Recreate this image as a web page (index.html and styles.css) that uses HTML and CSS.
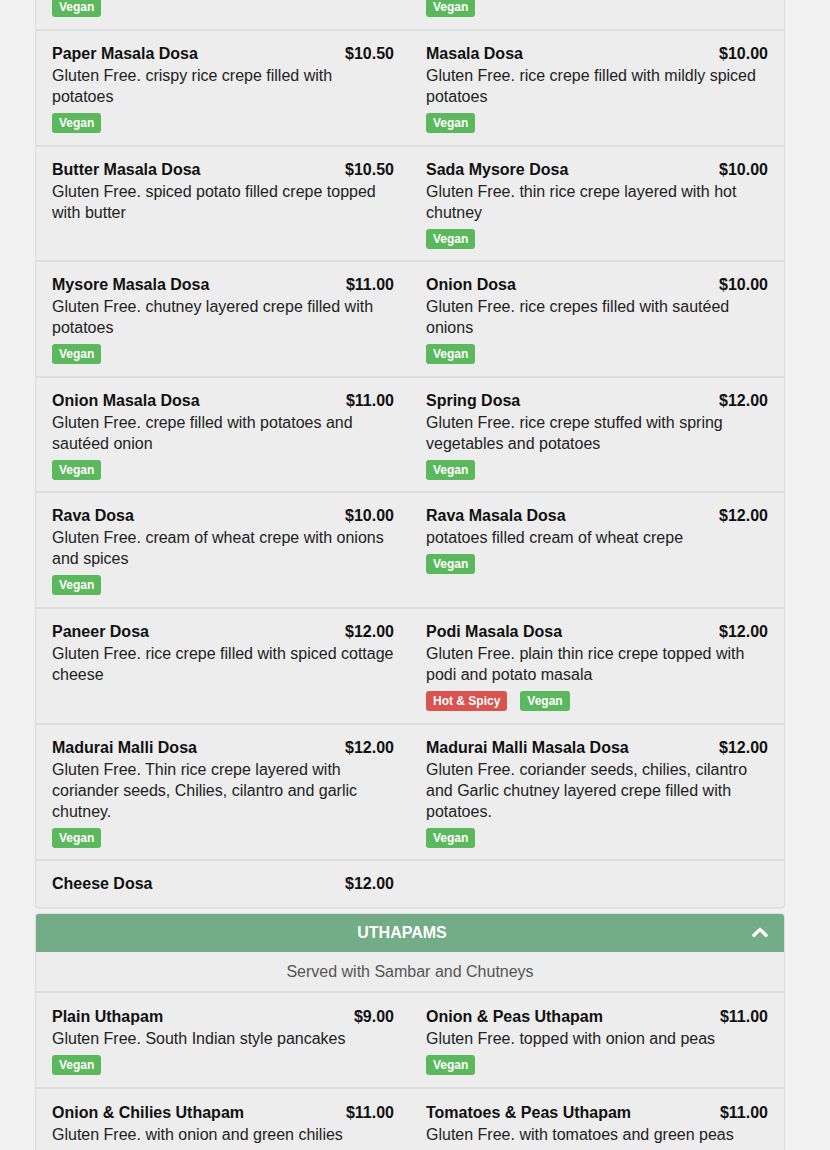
FILE: index.html
```html
<!DOCTYPE html>
<html lang="en">
<head>
<meta charset="utf-8">
<title>Menu</title>
<link rel="stylesheet" href="styles.css">
</head>
<body>
<div class="page">
  <section class="panel panel-first">
    <div class="body">
      <div class="row">
        <div class="item">
          <div class="head"><span class="name">Plain Dosa</span><span class="price">$9.00</span></div>
          <p class="desc">Gluten Free. thin and crispy rice crepe served plain</p>
          <div class="tags"><span class="tag vegan">Vegan</span></div>
        </div>
        <div class="item">
          <div class="head"><span class="name">Ghee Dosa</span><span class="price">$10.00</span></div>
          <p class="desc">Gluten Free. thin rice crepe roasted with clarified butter</p>
          <div class="tags"><span class="tag vegan">Vegan</span></div>
        </div>
      </div>
      <div class="row">
        <div class="item">
          <div class="head"><span class="name">Paper Masala Dosa</span><span class="price">$10.50</span></div>
          <p class="desc">Gluten Free. crispy rice crepe filled with potatoes</p>
          <div class="tags"><span class="tag vegan">Vegan</span></div>
        </div>
        <div class="item">
          <div class="head"><span class="name">Masala Dosa</span><span class="price">$10.00</span></div>
          <p class="desc">Gluten Free. rice crepe filled with mildly spiced potatoes</p>
          <div class="tags"><span class="tag vegan">Vegan</span></div>
        </div>
      </div>
      <div class="row">
        <div class="item">
          <div class="head"><span class="name">Butter Masala Dosa</span><span class="price">$10.50</span></div>
          <p class="desc">Gluten Free. spiced potato filled crepe topped with butter</p>
        </div>
        <div class="item">
          <div class="head"><span class="name">Sada Mysore Dosa</span><span class="price">$10.00</span></div>
          <p class="desc">Gluten Free. thin rice crepe layered with hot chutney</p>
          <div class="tags"><span class="tag vegan">Vegan</span></div>
        </div>
      </div>
      <div class="row">
        <div class="item">
          <div class="head"><span class="name">Mysore Masala Dosa</span><span class="price">$11.00</span></div>
          <p class="desc">Gluten Free. chutney layered crepe filled with potatoes</p>
          <div class="tags"><span class="tag vegan">Vegan</span></div>
        </div>
        <div class="item">
          <div class="head"><span class="name">Onion Dosa</span><span class="price">$10.00</span></div>
          <p class="desc">Gluten Free. rice crepes filled with sautéed onions</p>
          <div class="tags"><span class="tag vegan">Vegan</span></div>
        </div>
      </div>
      <div class="row">
        <div class="item">
          <div class="head"><span class="name">Onion Masala Dosa</span><span class="price">$11.00</span></div>
          <p class="desc">Gluten Free. crepe filled with potatoes and sautéed onion</p>
          <div class="tags"><span class="tag vegan">Vegan</span></div>
        </div>
        <div class="item">
          <div class="head"><span class="name">Spring Dosa</span><span class="price">$12.00</span></div>
          <p class="desc">Gluten Free. rice crepe stuffed with spring vegetables and potatoes</p>
          <div class="tags"><span class="tag vegan">Vegan</span></div>
        </div>
      </div>
      <div class="row">
        <div class="item">
          <div class="head"><span class="name">Rava Dosa</span><span class="price">$10.00</span></div>
          <p class="desc">Gluten Free. cream of wheat crepe with onions and spices</p>
          <div class="tags"><span class="tag vegan">Vegan</span></div>
        </div>
        <div class="item">
          <div class="head"><span class="name">Rava Masala Dosa</span><span class="price">$12.00</span></div>
          <p class="desc">potatoes filled cream of wheat crepe</p>
          <div class="tags"><span class="tag vegan">Vegan</span></div>
        </div>
      </div>
      <div class="row">
        <div class="item">
          <div class="head"><span class="name">Paneer Dosa</span><span class="price">$12.00</span></div>
          <p class="desc">Gluten Free. rice crepe filled with spiced cottage cheese</p>
        </div>
        <div class="item">
          <div class="head"><span class="name">Podi Masala Dosa</span><span class="price">$12.00</span></div>
          <p class="desc">Gluten Free. plain thin rice crepe topped with podi and potato masala</p>
          <div class="tags"><span class="tag hot">Hot &amp; Spicy</span><span class="tag vegan">Vegan</span></div>
        </div>
      </div>
      <div class="row">
        <div class="item">
          <div class="head"><span class="name">Madurai Malli Dosa</span><span class="price">$12.00</span></div>
          <p class="desc">Gluten Free. Thin rice crepe layered with coriander seeds, Chilies, cilantro and garlic chutney.</p>
          <div class="tags"><span class="tag vegan">Vegan</span></div>
        </div>
        <div class="item">
          <div class="head"><span class="name">Madurai Malli Masala Dosa</span><span class="price">$12.00</span></div>
          <p class="desc">Gluten Free. coriander seeds, chilies, cilantro and Garlic chutney layered crepe filled with potatoes.</p>
          <div class="tags"><span class="tag vegan">Vegan</span></div>
        </div>
      </div>
      <div class="row">
        <div class="item">
          <div class="head"><span class="name">Cheese Dosa</span><span class="price">$12.00</span></div>
        </div>
        <div class="item"></div>
      </div>
    </div>
  </section>

  <section class="panel">
    <div class="heading">
      <span class="heading-title">UTHAPAMS</span>
      <svg class="chevron" width="16" height="10" viewBox="0 0 16 10" aria-hidden="true">
        <path d="M2 8.2 L8 2.4 L14 8.2" fill="none" stroke="#fff" stroke-width="3.4" stroke-linecap="round" stroke-linejoin="round"/>
      </svg>
    </div>
    <div class="body">
      <div class="note">Served with Sambar and Chutneys</div>
      <div class="row">
        <div class="item item-wide">
          <div class="head"><span class="name">Plain Uthapam</span><span class="price">$9.00</span></div>
          <p class="desc">Gluten Free. South Indian style pancakes</p>
          <div class="tags"><span class="tag vegan">Vegan</span></div>
        </div>
        <div class="item item-wide">
          <div class="head"><span class="name">Onion &amp; Peas Uthapam</span><span class="price">$11.00</span></div>
          <p class="desc">Gluten Free. topped with onion and peas</p>
          <div class="tags"><span class="tag vegan">Vegan</span></div>
        </div>
      </div>
      <div class="row">
        <div class="item item-wide">
          <div class="head"><span class="name">Onion &amp; Chilies Uthapam</span><span class="price">$11.00</span></div>
          <p class="desc">Gluten Free. with onion and green chilies</p>
          <div class="tags"><span class="tag vegan">Vegan</span></div>
        </div>
        <div class="item item-wide">
          <div class="head"><span class="name">Tomatoes &amp; Peas Uthapam</span><span class="price">$11.00</span></div>
          <p class="desc">Gluten Free. with tomatoes and green peas</p>
          <div class="tags"><span class="tag vegan">Vegan</span></div>
        </div>
      </div>
    </div>
  </section>
</div>
</body>
</html>
```

FILE: styles.css
```css
html, body {
  margin: 0;
  padding: 0;
}

body {
  background: #f1f1f1;
  font-family: "Liberation Sans", Arial, sans-serif;
  font-size: 16px;
  color: #1a1a1a;
}

.page {
  width: 750px;
  margin: -84.6px 0 0 35px;
}

.panel {
  background: #ededed;
  border: 1px solid #dcdcdc;
  border-radius: 4px;
  box-shadow: 0 1px 1px rgba(0, 0, 0, 0.05);
  margin-bottom: 5px;
  overflow: hidden;
}

.panel-first {
  border-top: none;
  border-radius: 0 0 4px 4px;
}

.heading {
  display: flex;
  align-items: center;
  height: 38px;
  padding: 0 16px;
  background: #73ad87;
  color: #fff;
}

.heading-title {
  flex: 1;
  text-align: center;
  font-weight: bold;
  font-size: 16px;
  line-height: 38px;
}

.chevron {
  display: block;
  width: 16px;
  height: 10px;
  margin-top: -1px;
}

.note {
  padding: 9px 16px 9px;
  line-height: 21px;
  text-align: center;
  color: #555;
  border-bottom: 2px solid #dedede;
}

.row {
  display: flex;
  border-bottom: 2px solid #dedede;
}

.row:last-child {
  border-bottom: none;
}

.item {
  flex: 1 1 0;
  min-width: 0;
  padding: 12px 16px 11.6px;
}

.item-wide {
  padding-top: 13px;
  padding-bottom: 12px;
}

.head {
  display: flex;
  justify-content: space-between;
  font-weight: bold;
  line-height: 22px;
  color: #111;
}

.desc {
  margin: 0;
  line-height: 21px;
  color: #222;
}

.tags {
  display: flex;
  gap: 13px;
  margin-top: 6px;
}

.tag {
  display: inline-block;
  padding: 0 7px;
  height: 20px;
  line-height: 20px;
  border-radius: 3px;
  font-size: 12px;
  font-weight: bold;
  color: #fff;
}

.vegan {
  background: #5cb85c;
}

.hot {
  background: #d9534f;
}
```
